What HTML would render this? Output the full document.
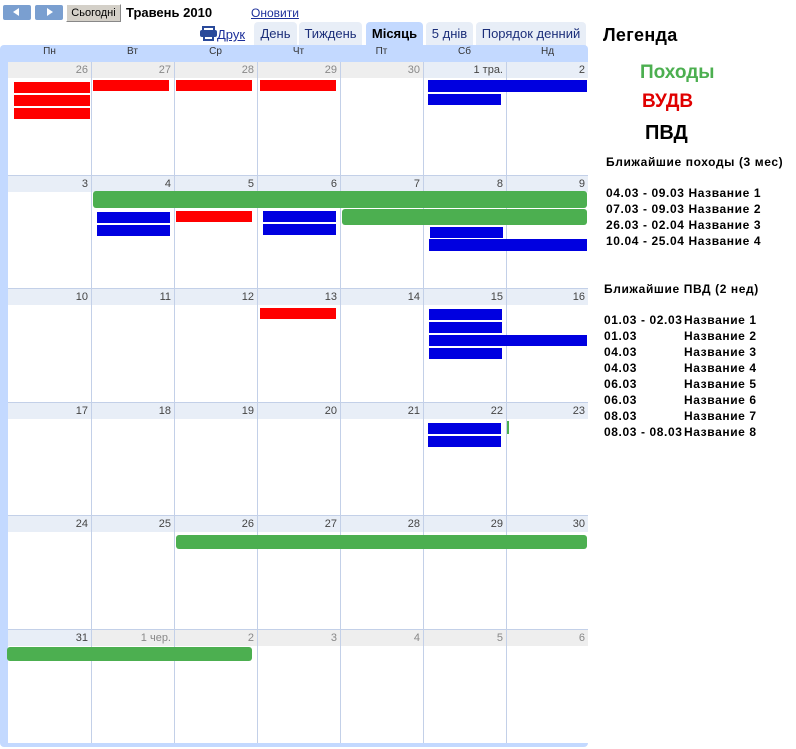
<!DOCTYPE html>
<html><head><meta charset="utf-8">
<style>
*{margin:0;padding:0;box-sizing:border-box}
body{width:796px;height:749px;background:#fff;font-family:"Liberation Sans",Arial,sans-serif;position:relative;overflow:hidden;font-size:12px}
.a{position:absolute}
.btn{position:absolute;top:5px;width:28px;height:15px;background:#7a9fd0;border-radius:2px}
.tab{position:absolute;top:22px;height:24px;background:#e8eef7;color:#1c2f7a;font-size:13px;line-height:24px;text-align:center;border-radius:4px 4px 0 0}
.dh{position:absolute;top:46px;font-size:10px;color:#333;text-align:center;width:83px}
.ds{position:absolute;height:16px;font-size:11px;color:#444;text-align:right;padding-right:3px;line-height:16px;background:#e8eef7}
.ds.o{background:#eeeeee;color:#888}
.vl{position:absolute;top:62px;width:1px;height:681px;background:#c3d0e8}
.hl{position:absolute;left:8px;width:580px;height:1px;background:#c3d0e8}
.r{position:absolute;background:#ff0000}
.b{position:absolute;background:#0000e0}
.g{position:absolute;background:#4caf50;border-radius:3px}
.lg{font-weight:bold;font-size:12px;color:#000;line-height:16px;letter-spacing:0.6px;white-space:pre}
</style></head><body>
<div class="btn" style="left:3px"><div class="a" style="left:10px;top:3px;border-right:6px solid #fff;border-top:4.5px solid transparent;border-bottom:4.5px solid transparent"></div></div>
<div class="btn" style="left:35px"><div class="a" style="left:12px;top:3px;border-left:6px solid #fff;border-top:4.5px solid transparent;border-bottom:4.5px solid transparent"></div></div>
<div class="a" style="left:66px;top:4px;width:55px;height:18px;background:#d4d0c8;border:1px solid #888;border-top-color:#fff;border-left-color:#fff;font-size:11px;line-height:16px;text-align:center">Сьогодні</div>
<div class="a" style="left:126px;top:5px;font-weight:bold;font-size:13px">Травень 2010</div>
<div class="a" style="left:251px;top:6px;font-size:12px;color:#1c2f9a;text-decoration:underline">Оновити</div>
<div class="a" style="left:202px;top:26px;width:13px;height:5px;border:2px solid #2a4a9a;border-bottom:none"></div>
<div class="a" style="left:200px;top:30px;width:17px;height:7px;background:#2a4a9a;border-radius:2px"></div>
<div class="a" style="left:203px;top:35px;width:11px;height:6px;background:#fff;border:2px solid #2a4a9a"></div>
<div class="a" style="left:217px;top:27px;font-size:13px;color:#1c2f9a;text-decoration:underline">Друк</div>
<div class="tab" style="left:254px;width:43px">День</div>
<div class="tab" style="left:299px;width:63px">Тиждень</div>
<div class="tab" style="left:366px;width:57px;background:#c3d9ff;color:#000;font-weight:bold">Місяць</div>
<div class="tab" style="left:426px;width:47px">5 днів</div>
<div class="tab" style="left:476px;width:110px">Порядок денний</div>
<div class="a" style="left:0;top:45px;width:588px;height:702px;background:#c3d9ff;border-radius:4px"></div>
<div class="a" style="left:8px;top:62px;width:580px;height:681px;background:#fff"></div>
<div class="dh" style="left:8px">Пн</div><div class="dh" style="left:91px">Вт</div><div class="dh" style="left:174px">Ср</div><div class="dh" style="left:257px">Чт</div><div class="dh" style="left:340px">Пт</div><div class="dh" style="left:423px">Сб</div><div class="dh" style="left:506px">Нд</div>

<div class="ds o" style="left:8px;top:62px;width:83px">26</div><div class="ds o" style="left:91px;top:62px;width:83px">27</div><div class="ds o" style="left:174px;top:62px;width:83px">28</div><div class="ds o" style="left:257px;top:62px;width:83px">29</div><div class="ds o" style="left:340px;top:62px;width:83px">30</div><div class="ds" style="left:423px;top:62px;width:83px">1 тра.</div><div class="ds" style="left:506px;top:62px;width:82px">2</div>
<div class="a" style="left:8px;top:176px;width:580px;height:16px;background:#e8eef7"></div>
<div class="a" style="left:8px;top:289px;width:580px;height:16px;background:#e8eef7"></div>
<div class="a" style="left:8px;top:403px;width:580px;height:16px;background:#e8eef7"></div>
<div class="a" style="left:8px;top:516px;width:580px;height:16px;background:#e8eef7"></div>
<div class="a" style="left:8px;top:630px;width:83px;height:16px;background:#e8eef7"></div>
<div class="a" style="left:91px;top:630px;width:497px;height:16px;background:#eeeeee"></div>

<div class="vl" style="left:91px"></div><div class="vl" style="left:174px"></div><div class="vl" style="left:257px"></div><div class="vl" style="left:340px"></div><div class="vl" style="left:423px"></div><div class="vl" style="left:506px"></div>
<div class="hl" style="top:175px"></div><div class="hl" style="top:288px"></div><div class="hl" style="top:402px"></div><div class="hl" style="top:515px"></div><div class="hl" style="top:629px"></div>

<div class="ds" style="background:none;left:8px;top:176px;width:83px">3</div><div class="ds" style="background:none;left:91px;top:176px;width:83px">4</div><div class="ds" style="background:none;left:174px;top:176px;width:83px">5</div><div class="ds" style="background:none;left:257px;top:176px;width:83px">6</div><div class="ds" style="background:none;left:340px;top:176px;width:83px">7</div><div class="ds" style="background:none;left:423px;top:176px;width:83px">8</div><div class="ds" style="background:none;left:506px;top:176px;width:82px">9</div>
<div class="ds" style="background:none;left:8px;top:289px;width:83px">10</div><div class="ds" style="background:none;left:91px;top:289px;width:83px">11</div><div class="ds" style="background:none;left:174px;top:289px;width:83px">12</div><div class="ds" style="background:none;left:257px;top:289px;width:83px">13</div><div class="ds" style="background:none;left:340px;top:289px;width:83px">14</div><div class="ds" style="background:none;left:423px;top:289px;width:83px">15</div><div class="ds" style="background:none;left:506px;top:289px;width:82px">16</div>
<div class="ds" style="background:none;left:8px;top:403px;width:83px">17</div><div class="ds" style="background:none;left:91px;top:403px;width:83px">18</div><div class="ds" style="background:none;left:174px;top:403px;width:83px">19</div><div class="ds" style="background:none;left:257px;top:403px;width:83px">20</div><div class="ds" style="background:none;left:340px;top:403px;width:83px">21</div><div class="ds" style="background:none;left:423px;top:403px;width:83px">22</div><div class="ds" style="background:none;left:506px;top:403px;width:82px">23</div>
<div class="ds" style="background:none;left:8px;top:516px;width:83px">24</div><div class="ds" style="background:none;left:91px;top:516px;width:83px">25</div><div class="ds" style="background:none;left:174px;top:516px;width:83px">26</div><div class="ds" style="background:none;left:257px;top:516px;width:83px">27</div><div class="ds" style="background:none;left:340px;top:516px;width:83px">28</div><div class="ds" style="background:none;left:423px;top:516px;width:83px">29</div><div class="ds" style="background:none;left:506px;top:516px;width:82px">30</div>
<div class="ds" style="background:none;left:8px;top:630px;width:83px">31</div><div class="ds o" style="background:none;left:91px;top:630px;width:83px">1 чер.</div><div class="ds o" style="background:none;left:174px;top:630px;width:83px">2</div><div class="ds o" style="background:none;left:257px;top:630px;width:83px">3</div><div class="ds o" style="background:none;left:340px;top:630px;width:83px">4</div><div class="ds o" style="background:none;left:423px;top:630px;width:83px">5</div><div class="ds o" style="background:none;left:506px;top:630px;width:82px">6</div>

<div class="r" style="left:14px;top:82px;width:76px;height:11px"></div>
<div class="r" style="left:14px;top:95px;width:76px;height:11px"></div>
<div class="r" style="left:14px;top:108px;width:76px;height:11px"></div>
<div class="r" style="left:93px;top:80px;width:76px;height:11px"></div>
<div class="r" style="left:176px;top:80px;width:76px;height:11px"></div>
<div class="r" style="left:260px;top:80px;width:76px;height:11px"></div>
<div class="b" style="left:428px;top:80px;width:159px;height:12px"></div>
<div class="b" style="left:428px;top:94px;width:73px;height:11px"></div>
<div class="g" style="left:93px;top:191px;width:494px;height:17px"></div>
<div class="b" style="left:97px;top:212px;width:73px;height:11px"></div>
<div class="b" style="left:97px;top:225px;width:73px;height:11px"></div>
<div class="r" style="left:176px;top:211px;width:76px;height:11px"></div>
<div class="b" style="left:263px;top:211px;width:73px;height:11px"></div>
<div class="b" style="left:263px;top:224px;width:73px;height:11px"></div>
<div class="g" style="left:342px;top:209px;width:245px;height:16px"></div>
<div class="b" style="left:430px;top:227px;width:73px;height:11px"></div>
<div class="b" style="left:429px;top:239px;width:158px;height:12px"></div>
<div class="r" style="left:260px;top:308px;width:76px;height:11px"></div>
<div class="b" style="left:429px;top:309px;width:73px;height:11px"></div>
<div class="b" style="left:429px;top:322px;width:73px;height:11px"></div>
<div class="b" style="left:429px;top:335px;width:158px;height:11px"></div>
<div class="b" style="left:429px;top:348px;width:73px;height:11px"></div>
<div class="b" style="left:428px;top:423px;width:73px;height:11px"></div>
<div class="b" style="left:428px;top:436px;width:73px;height:11px"></div>
<div class="a" style="left:507px;top:421px;width:2px;height:13px;background:#4caf50"></div>
<div class="g" style="left:176px;top:535px;width:411px;height:14px"></div>
<div class="g" style="left:7px;top:647px;width:245px;height:14px"></div>

<div class="a" style="left:603px;top:25px;font-weight:bold;font-size:18px;letter-spacing:0.3px">Легенда</div>
<div class="a" style="left:640px;top:62px;font-weight:bold;font-size:19px;color:#4caf50">Походы</div>
<div class="a" style="left:642px;top:91px;font-weight:bold;font-size:19px;color:#e00000">ВУДВ</div>
<div class="a" style="left:645px;top:122px;font-weight:bold;font-size:20px">ПВД</div>
<div class="a lg" style="left:606px;top:154px">Ближайшие походы (3 мес)</div>
<div class="a lg" style="left:606px;top:185px">04.03 - 09.03 Название 1
07.03 - 09.03 Название 2
26.03 - 02.04 Название 3
10.04 - 25.04 Название 4</div>
<div class="a lg" style="left:604px;top:281px">Ближайшие ПВД (2 нед)</div>
<div class="a lg" style="left:604px;top:312px">01.03 - 02.03
01.03
04.03
04.03
06.03
06.03
08.03
08.03 - 08.03</div>
<div class="a lg" style="left:684px;top:312px">Название 1
Название 2
Название 3
Название 4
Название 5
Название 6
Название 7
Название 8</div>
</body></html>
